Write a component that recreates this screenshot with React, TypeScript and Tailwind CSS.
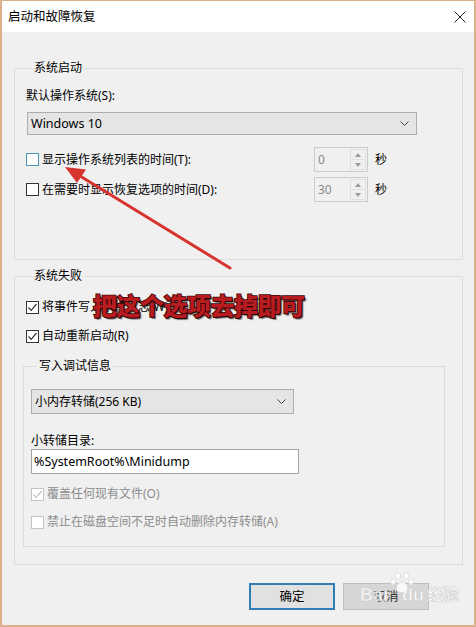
import React from 'react';

const font = "font-['Noto_Sans','Noto_Sans_CJK_SC',sans-serif]";

function CheckBox({ checked = false, disabled = false, focus = false }: { checked?: boolean; disabled?: boolean; focus?: boolean }) {
  const border = disabled ? 'border-[#c4c4c4]' : focus ? 'border-[#4a97b5]' : 'border-[#333333]';
  return (
    <span className={`w-[13px] h-[13px] border ${border} bg-white flex items-center justify-center shrink-0`}>
      {checked && (
        <svg width="11" height="11" viewBox="0 0 11 11">
          <path d="M1.5 5.5 L4.2 8.3 L9.5 2" fill="none" stroke={disabled ? '#c4c4c4' : '#333'} strokeWidth="1.2" />
        </svg>
      )}
    </span>
  );
}

function Spinner({ value }: { value: string }) {
  return (
    <div className="w-[54px] h-[25px] border border-[#cccccc] bg-[#f0f0f0] flex">
      <div className="flex-1 pl-[3px] flex items-center text-[#8a8a8a] text-[12px]">{value}</div>
      <div className="w-[16px] my-[1px] mr-[1px] flex flex-col border border-[#e0e0e0]">
        <div className="flex-1 flex items-center justify-center border-b border-[#e0e0e0]">
          <svg width="6" height="4" viewBox="0 0 6 4"><path d="M0 4 L3 0 L6 4Z" fill="#9a9a9a" /></svg>
        </div>
        <div className="flex-1 flex items-center justify-center">
          <svg width="6" height="4" viewBox="0 0 6 4"><path d="M0 0 L3 4 L6 0Z" fill="#9a9a9a" /></svg>
        </div>
      </div>
    </div>
  );
}

function Chevron() {
  return (
    <svg width="9" height="5" viewBox="0 0 9 5">
      <path d="M0.5 0.5 L4.5 4.5 L8.5 0.5" fill="none" stroke="#444" strokeWidth="1" />
    </svg>
  );
}

export default function App() {
  return (
    <div className={`relative w-[476px] h-[627px] border-t border-x-2 border-b-2 border-[#ddb08c] bg-[#f0f0f0] flex flex-col text-[12px] leading-[16px] text-[#000] ${font}`}>
      {/* title bar */}
      <div className="h-[31px] bg-white flex items-center justify-between pl-[6px] pr-[8px] shrink-0">
        <span className="text-[12.5px]">启动和故障恢复</span>
        <svg width="12" height="12" viewBox="0 0 12 12">
          <path d="M0.5 0.5 L11.5 11.5 M11.5 0.5 L0.5 11.5" stroke="#222" strokeWidth="1" />
        </svg>
      </div>

      {/* 系统启动 */}
      <fieldset className="mt-[28px] ml-[12px] mr-[11px] border border-[#dcdcdc] pl-[11px] pt-[12px] pb-[57px]">
        <legend className="ml-[6px] px-[2px] leading-[16px]">系统启动</legend>
        <div>默认操作系统(S):</div>
        <div className="mt-[8px] ml-[1px] w-[390px] h-[23px] bg-[#e5e5e5] border border-[#adadad] flex items-center justify-between pl-[3px] pr-[7px]">
          <span className="text-[12.5px]">Windows 10</span>
          <Chevron />
        </div>
        <div className="mt-[12px] h-[25px] flex items-center">
          <div className="w-[288px] flex items-center gap-[3px]">
            <CheckBox focus />
            <span>显示操作系统列表的时间(T):</span>
          </div>
          <Spinner value="0" />
          <span className="ml-[7px]">秒</span>
        </div>
        <div className="mt-[5px] h-[25px] flex items-center">
          <div className="w-[288px] flex items-center gap-[3px]">
            <CheckBox />
            <span>在需要时显示恢复选项的时间(D):</span>
          </div>
          <Spinner value="30" />
          <span className="ml-[7px]">秒</span>
        </div>
      </fieldset>

      {/* 系统失败 */}
      <fieldset className="mt-[8px] ml-[12px] mr-[11px] border border-[#dcdcdc] pl-[11px] pt-[15px] pb-[17px]">
        <legend className="ml-[6px] px-[2px] leading-[16px]">系统失败</legend>
        <div className="h-[16px] flex items-center gap-[3px]">
          <CheckBox checked />
          <span>将事件写入系统日志(W)</span>
        </div>
        <div className="mt-[13px] h-[16px] flex items-center gap-[3px]">
          <CheckBox checked />
          <span>自动重新启动(R)</span>
        </div>

        <fieldset className="mt-[14px] -ml-[3px] mr-[17px] border border-[#dcdcdc] pl-[7px] pt-[15px] pb-[16px]">
          <legend className="ml-[6px] px-[2px] leading-[16px]">写入调试信息</legend>
          <div className="w-[263px] h-[25px] bg-[#e5e5e5] border border-[#adadad] flex items-center justify-between pl-[3px] pr-[7px]">
            <span>小内存转储(256 KB)</span>
            <Chevron />
          </div>
          <div className="mt-[19px]">小转储目录:</div>
          <div className="w-[268px] h-[25px] bg-white border border-[#a5a5a5] flex items-center pl-[2px] text-[12.5px]">
            %SystemRoot%\Minidump
          </div>
          <div className="mt-[12px] h-[16px] flex items-center gap-[3px] text-[#8d8d8d]">
            <CheckBox checked disabled />
            <span>覆盖任何现有文件(O)</span>
          </div>
          <div className="mt-[12px] h-[16px] flex items-center gap-[3px] text-[#8d8d8d]">
            <CheckBox disabled />
            <span>禁止在磁盘空间不足时自动删除内存转储(A)</span>
          </div>
        </fieldset>
      </fieldset>

      {/* buttons */}
      <div className="mt-[18px] flex justify-end gap-[8px] pr-[45px]">
        <button className="w-[86px] h-[27px] bg-[#e1e1e1] border-2 border-[#2f7db4] text-[12.5px] flex items-center justify-center">
          确定
        </button>
        <button className="w-[86px] h-[27px] bg-[#d6d6d6] border border-[#bfbfbf] text-[12.5px] text-[#333] flex items-center justify-center">
          取消
        </button>
      </div>

      {/* red arrow annotation */}
      <svg className="absolute left-0 top-0 pointer-events-none" width="476" height="627" viewBox="0 0 476 627">
        <line x1="228" y1="267" x2="78" y2="175" stroke="#d8342f" strokeWidth="3" strokeLinecap="round" />
        <path d="M63 166 L84 168.5 L75 182 Z" fill="#d8342f" />
      </svg>

      {/* caption overlay */}
      <div className="absolute left-[91px] top-[290px] text-[24px] leading-[28px] font-black text-[#b81c20] tracking-[-0.5px] [-webkit-text-stroke:1.5px_#3a0606] [paint-order:stroke_fill] [text-shadow:1px_1px_0_#2a0303,2px_2px_1px_rgba(0,0,0,0.5)] font-['Noto_Sans_CJK_SC',sans-serif]">
        把这个选项去掉即可
      </div>

      {/* watermark */}
      <div className="absolute left-[358px] top-[584px] pointer-events-none flex items-end font-['Liberation_Sans','Noto_Sans_CJK_SC',sans-serif] font-bold text-[18px] leading-[20px] text-white/80 [-webkit-text-stroke:0.5px_#c8c8c8]">
        <span>Bai</span>
        <span className="ml-[14px]">du</span>
        <span className="ml-[3px] text-[16px]">经验</span>
      </div>
      <svg className="absolute left-[388px] top-[571px] pointer-events-none" width="26" height="22" viewBox="0 0 26 22">
        <g fill="#ffffff" fillOpacity="0.85" stroke="#cfcfcf" strokeWidth="0.6">
          <ellipse cx="8" cy="4" rx="2.6" ry="3.4" />
          <ellipse cx="16" cy="4" rx="2.6" ry="3.4" />
          <ellipse cx="3" cy="10" rx="2.4" ry="3" />
          <ellipse cx="21" cy="10" rx="2.4" ry="3" />
          <path d="M12 10 C7 10 5 17 7 19 C9 21 15 21 17 19 C19 17 17 10 12 10Z" />
        </g>
      </svg>
    </div>
  );
}
